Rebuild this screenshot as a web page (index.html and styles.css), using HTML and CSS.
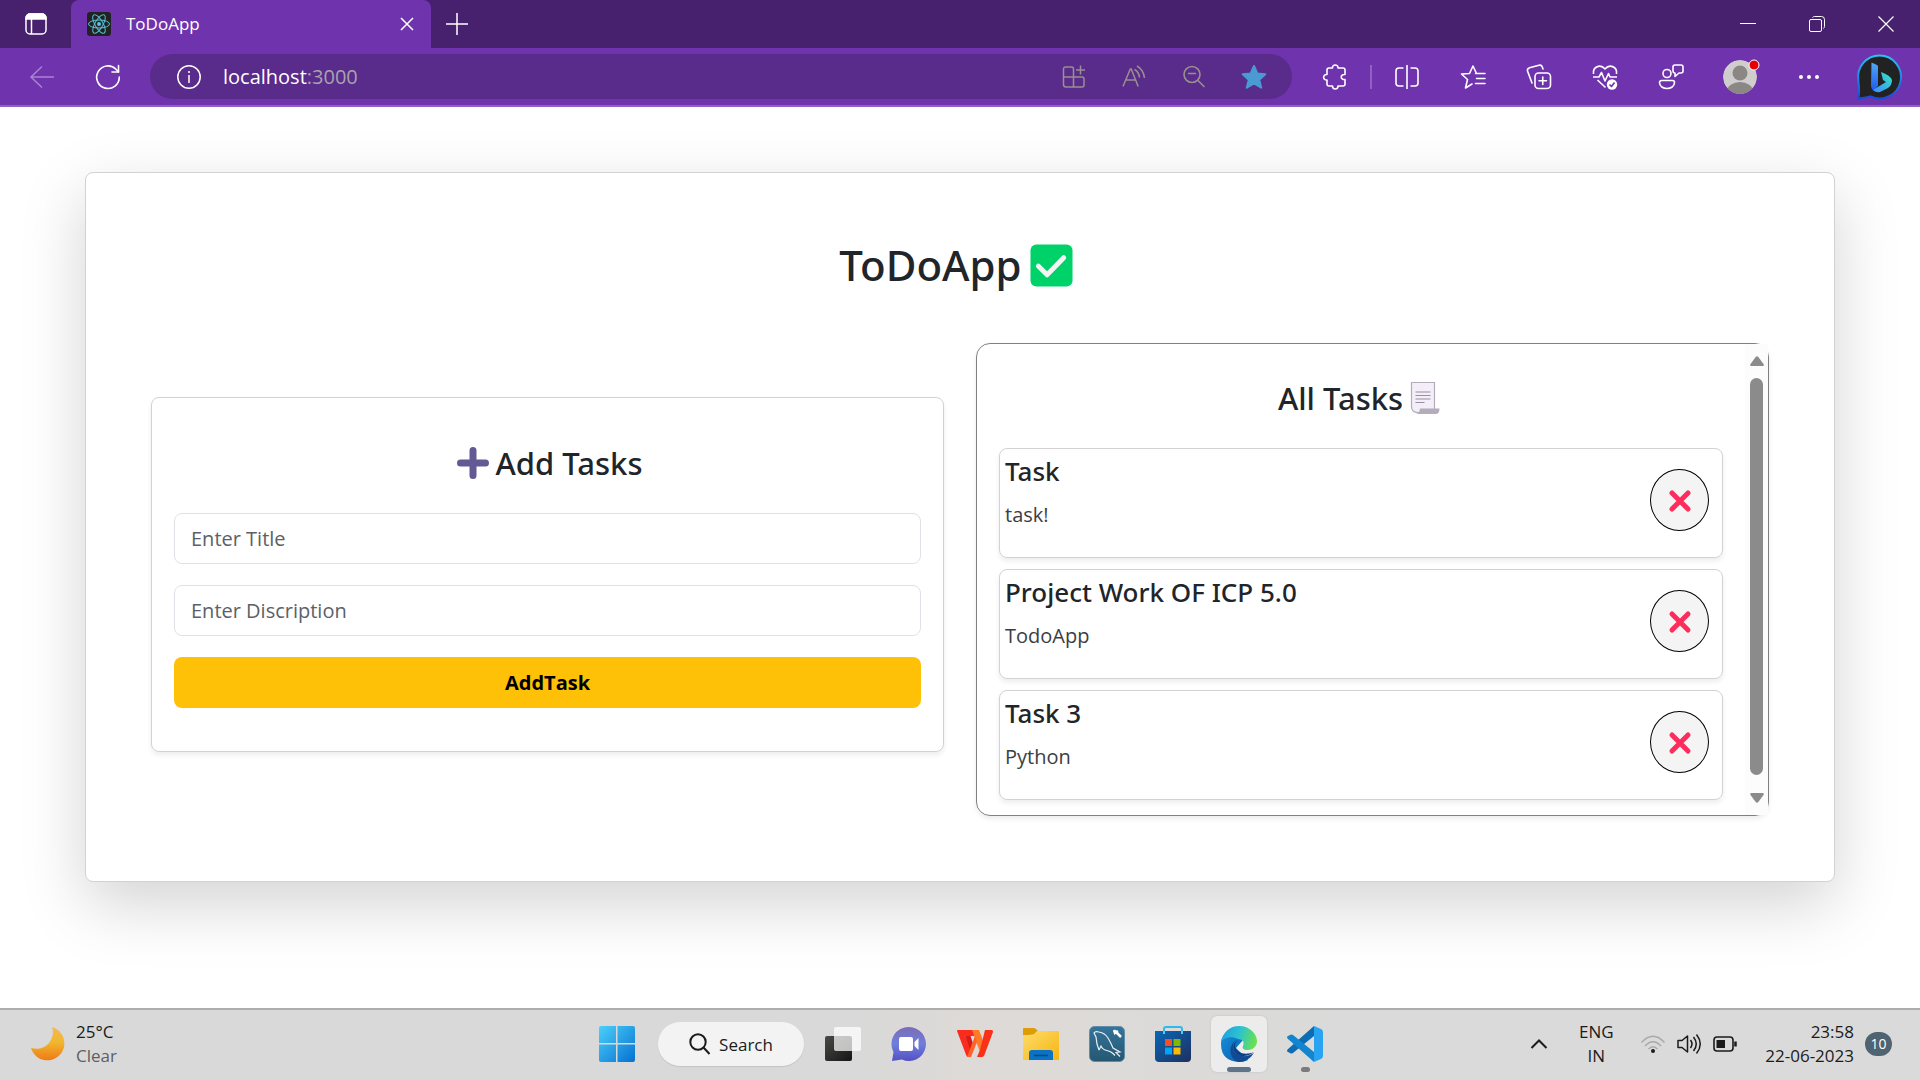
FILE: index.html
```html
<!DOCTYPE html>
<html lang="en">
<head>
<meta charset="utf-8">
<meta name="viewport" content="width=device-width, initial-scale=1">
<title>ToDoApp</title>
<link rel="stylesheet" href="styles.css">
</head>
<body>
<header class="browser">
  <div class="titlebar">
    <button class="tab-actions" aria-label="Tab actions"><svg width="24" height="24" viewBox="0 0 24 24" fill="none" stroke="#fff" stroke-width="1.5"><rect x="2" y="2" width="20" height="20" rx="4"/><path d="M2 6a4 4 0 0 1 4-4h12a4 4 0 0 1 4 4v1H2z" fill="#fff"/><path d="M7.500 7v15"/></svg></button>
    <div class="tab">
      <svg width="24" height="24" viewBox="0 0 24 24" fill="none" stroke="#58c4dc" stroke-width="1"><rect width="24" height="24" rx="3" fill="#222" stroke="none"/><ellipse cx="12" cy="12" rx="10.500" ry="4"/><ellipse cx="12" cy="12" rx="10.500" ry="4" transform="rotate(60 12 12)"/><ellipse cx="12" cy="12" rx="10.500" ry="4" transform="rotate(120 12 12)"/><circle cx="12" cy="12" r="2" fill="#58c4dc" stroke="none"/></svg>
      <span class="tab-title">ToDoApp</span>
      <button class="tab-close" aria-label="Close tab"><svg width="14" height="14" viewBox="0 0 14 14" stroke="#fff" stroke-width="1.500"><path d="M1 1l12 12M13 1L1 13"/></svg></button>
    </div>
    <button class="new-tab" aria-label="New tab"><svg width="22" height="22" viewBox="0 0 22 22" stroke="#fff" stroke-width="1.500"><path d="M11 0v22M0 11h22"/></svg></button>
    <div class="window-controls">
      <button aria-label="Minimize"><svg width="16" height="16" viewBox="0 0 16 16" stroke="#fff"><path d="M0 7.500h16"/></svg></button>
      <button aria-label="Restore"><svg width="16" height="16" viewBox="0 0 16 16" fill="none" stroke="#fff"><rect x=".5" y="3.500" width="12" height="12" rx="1.500"/><path d="M3.500 1.500q1-1 2-1h7a3 3 0 0 1 3 3v7q0 1-1 2"/></svg></button>
      <button aria-label="Close window"><svg width="16" height="16" viewBox="0 0 16 16" stroke="#fff" stroke-width="1.200"><path d="M.5.5l15 15M15.500.5l-15 15"/></svg></button>
    </div>
  </div>
  <div class="toolbar">
    <button class="back" aria-label="Back"><svg width="24" height="24" viewBox="0 0 24 24" fill="none" stroke="#a884cf" stroke-width="1.500"><path d="M24 12H1M12 1.500L1 12l11 10.500"/></svg></button>
    <button class="refresh" aria-label="Refresh"><svg width="26" height="26" viewBox="0 0 26 26" fill="none" stroke="#fff" stroke-width="1.600" stroke-linecap="round" stroke-linejoin="round"><path d="M24.300 13A11.300 11.300 0 1 1 21 5.200L23.500 8"/><path d="M23.500 1.500V8H17"/></svg></button>
    <div class="address">
      <svg class="info" width="24" height="24" viewBox="0 0 24 24" fill="none" stroke="#fff" stroke-width="1.500"><circle cx="12" cy="12" r="11.200"/><path d="M12 10v8M12 6v2"/></svg>
      <a class="url" href="#">localhost<span class="port">:3000</span></a>
      <button aria-label="Apps"><svg width="24" height="24" viewBox="0 0 24 24" fill="none" stroke="#99908f" stroke-width="1.500"><path d="M11.500 22H4a2.500 2.500 0 0 1-2.500-2.500V4A2 2 0 0 1 3.500 2h6a2 2 0 0 1 2 2v18H20a2 2 0 0 0 2-2v-6a2 2 0 0 0-2-2H1.500M18.500.5v9M14 5h9"/></svg></button>
      <button aria-label="Read aloud"><svg width="24" height="24" viewBox="0 0 24 24" fill="none" stroke="#99908f" stroke-width="1.500"><path d="M1 21.500L8.300 4h.9l7 17.500M3.800 15h9.800M12.500 4.500q4.500 2.500 5 8M15 1q6.500 3.500 7.500 12"/></svg></button>
      <button aria-label="Zoom out"><svg width="24" height="24" viewBox="0 0 24 24" fill="none" stroke="#99908f" stroke-width="1.600"><circle cx="10" cy="9.500" r="8"/><path d="M6 8.500h8M15.700 15.200L22.500 22"/></svg></button>
      <button aria-label="Favorite"><svg width="26" height="26" viewBox="0 0 26 26" fill="#4a9ad4" stroke="#4a9ad4" stroke-width="2" stroke-linejoin="round"><path d="M13 2l3.300 7.500 8 .7-6 5.500 1.900 8L13 19.500l-7.200 4.200 1.900-8-6-5.500 8-.7z"/></svg></button>
    </div>
    <button class="tool" aria-label="Extensions"><svg width="26" height="26" viewBox="0 0 26 26" fill="none" stroke="#fff" stroke-width="1.600" stroke-linejoin="round"><path d="M7 4h3.500c-.5-4 6-4 5.500 0H21a2 2 0 0 1 2 2v4.500c-5-.5-5 5.500 0 5V20a2 2 0 0 1-2 2h-5c0 4-5.500 4-5.500 0H7a2 2 0 0 1-2-2v-4c-4.500.5-4.500-6 0-5.500V6a2 2 0 0 1 2-2"/></svg></button>
    <span class="divider"></span>
    <button class="tool" aria-label="Split screen"><svg width="26" height="26" viewBox="0 0 26 26" fill="none" stroke="#fff" stroke-width="1.600"><path d="M9.500 4H5a3 3 0 0 0-3 3v12a3 3 0 0 0 3 3h4.500M16.500 4H21a3 3 0 0 1 3 3v12a3 3 0 0 1-3 3h-4.500M13 1v24"/></svg></button>
    <button class="tool" aria-label="Favorites"><svg width="26" height="26" viewBox="0 0 26 26" fill="none" stroke="#fff" stroke-width="1.600" stroke-linejoin="round" stroke-linecap="round"><path d="M19 9.500h-2.500L13 2 9.500 9.500 1.500 10l6 5.500L5.500 24l6.500-4M15.500 9.500H25M16.500 14.500H25M15.500 19.500H25"/></svg></button>
    <button class="tool" aria-label="Collections"><svg width="26" height="26" viewBox="0 0 26 26" fill="none" stroke="#fff" stroke-width="1.600" stroke-linecap="round"><rect x="9" y="9" width="15.500" height="15.500" rx="3.500"/><path d="M16.750 13v7.500M13 16.750h7.500M6 19L1.500 7Q1 4.500 3.500 3.700L13 1.200q2.500-.5 3.300 1.800L17 5"/></svg></button>
    <button class="tool" aria-label="Browser essentials"><svg width="26" height="26" viewBox="0 0 26 26" fill="none" stroke="#fff" stroke-width="1.600" stroke-linejoin="round"><path d="M1.500 10C.5 2 9 0 13 5c4-5 12.500-3 11.500 5M1 13h6l2.500-4.500L13 17l3.500-7.500L18 13h7M5.500 16l8 7.500"/><circle cx="20" cy="20.500" r="5.200" fill="#fff" stroke="none"/><path d="M17.500 20.500l2 2 3-4" stroke="#6f33ad"/></svg></button>
    <button class="tool" aria-label="Feedback"><svg width="26" height="26" viewBox="0 0 26 26" fill="none" stroke="#fff" stroke-width="1.600" stroke-linejoin="round"><circle cx="9" cy="9.500" r="4"/><path d="M3.500 16.500h11a2 2 0 0 1 2 2c0 8-15 8-15 0a2 2 0 0 1 2-2zM16.500 1H23a2 2 0 0 1 2 2v4a2 2 0 0 1-2 2h-2l-4 3.500V9a2 2 0 0 1-2-2V3a2 2 0 0 1 2-2z"/></svg></button>
    <button class="tool profile" aria-label="Profile"><svg width="38" height="38" viewBox="0 0 38 38"><defs><clipPath id="face"><circle cx="19" cy="19" r="17"/></clipPath></defs><g clip-path="url(#face)"><circle cx="19" cy="19" r="17" fill="#d0cecd"/><circle cx="19" cy="15" r="7.500" fill="#8b8785"/><ellipse cx="19" cy="33" rx="13" ry="9" fill="#8b8785"/></g><circle cx="33" cy="7" r="5" fill="#e30000" stroke="#fff"/></svg></button>
    <button class="tool" aria-label="Settings and more"><svg width="22" height="6" viewBox="0 0 22 6" fill="#fff"><circle cx="3" cy="3" r="2"/><circle cx="11" cy="3" r="2"/><circle cx="19" cy="3" r="2"/></svg></button>
    <button class="tool bing" aria-label="Bing Chat"><svg width="46" height="46" viewBox="0 0 46 46"><defs><linearGradient id="ring" x1="0" y1="0" x2="0" y2="1"><stop offset="0" stop-color="#25c5f2"/><stop offset="1" stop-color="#1c49d8"/></linearGradient><linearGradient id="letter" x1="0" y1="0" x2="0" y2="1"><stop offset="0" stop-color="#4fa9f5"/><stop offset="1" stop-color="#1f58ed"/></linearGradient><linearGradient id="swoosh" x1="1" y1="0" x2="0" y2="1"><stop offset="0" stop-color="#31e5c0"/><stop offset="1" stop-color="#3d8bff"/></linearGradient></defs><path d="M23.500 1.500a21.500 21.500 0 1 1-9 41Q9 44 2 44.500 4 40 2.300 26A21.500 21.500 0 0 1 23.500 1.500z" fill="#222" stroke="url(#ring)" stroke-width="2"/><path d="M15.500 8.500l5.500 2.500q1 .5 1 2v19l-4 5q-3-2-3-6z" fill="url(#letter)"/><path d="M25 18q9 3 11 8 0 5-4 8l-8 4q-4 1-7-2l13-8-3-2z" fill="url(#swoosh)"/></svg></button>
  </div>
</header>

<main class="page">
  <section class="app">
    <h1 class="app-title">ToDoApp <svg width="43" height="43" viewBox="0 0 44 44"><rect x=".5" y=".5" width="43" height="43" rx="6" fill="#00d26a"/><path d="M8.500 22.500l9 9L34.500 14" fill="none" stroke="#f4f4f4" stroke-width="5" stroke-linecap="round" stroke-linejoin="round"/></svg></h1>
    <div class="columns">
      <form class="add-card">
        <h2 class="heading"><svg width="32" height="32" viewBox="0 0 32 32" stroke="#635994" stroke-width="7" stroke-linecap="round"><path d="M16 3.500v25M3.500 16h25"/></svg> Add Tasks</h2>
        <input class="field" type="text" placeholder="Enter Title" aria-label="Title">
        <input class="field" type="text" placeholder="Enter Discription" aria-label="Description">
        <button class="submit" type="button">AddTask</button>
      </form>
      <section class="tasks">
        <div class="tasks-body">
          <h2 class="heading">All Tasks <svg width="30" height="34" viewBox="0 0 30 34"><path d="M1.500 1.500h23v30H8q-6.500 0-6.500-6z" fill="#f3eef8" stroke="#b4acbc" stroke-width="1.200"/><path d="M5.500 11h15M5.500 14.500h15M5.500 18h15M5.500 21.500h9" stroke="#998ea4" stroke-width="1.200"/><path d="M10 27.500h19.500q0 5.500-4 5.500H6q3.500-1 4-5.500z" fill="#b4acbc"/></svg></h2>
          <ul class="task-list">
            <li class="task">
              <div><h3 class="task-title">Task</h3><p class="task-text">task!</p></div>
              <button class="delete" aria-label="Delete Task"><svg width="22" height="22" viewBox="0 0 22 22" stroke-width="5" stroke-linecap="round"><path class="cross" d="M3 4l16 16M19 4L3 20"/></svg></button>
            </li>
            <li class="task">
              <div><h3 class="task-title">Project Work OF ICP 5.0</h3><p class="task-text">TodoApp</p></div>
              <button class="delete" aria-label="Delete Project Work OF ICP 5.0"><svg width="22" height="22" viewBox="0 0 22 22" stroke-width="5" stroke-linecap="round"><path class="cross" d="M3 4l16 16M19 4L3 20"/></svg></button>
            </li>
            <li class="task">
              <div><h3 class="task-title">Task 3</h3><p class="task-text">Python</p></div>
              <button class="delete" aria-label="Delete Task 3"><svg width="22" height="22" viewBox="0 0 22 22" stroke-width="5" stroke-linecap="round"><path class="cross" d="M3 4l16 16M19 4L3 20"/></svg></button>
            </li>
          </ul>
        </div>
        <div class="scrollbar" aria-hidden="true">
          <svg width="14" height="10" viewBox="0 0 14 10"><path d="M5.500 1.200q1.500-2 3 0L13.500 8q1 2-1 2h-11q-2 0-1-2z" fill="#8b8b8b"/></svg>
          <span class="thumb"></span>
          <svg width="14" height="10" viewBox="0 0 14 10"><path d="M5.500 8.800q1.500 2 3 0L13.500 2q1-2-1-2h-11q-2 0-1 2z" fill="#8b8b8b"/></svg>
        </div>
      </section>
    </div>
  </section>
</main>

<footer class="taskbar">
  <div class="weather">
    <svg width="34" height="34" viewBox="0 0 34 34"><defs><linearGradient id="moon" x1="0" y1="0" x2="0" y2="1"><stop offset="0" stop-color="#f5b656"/><stop offset=".45" stop-color="#f0b82e"/><stop offset="1" stop-color="#ef7a16"/></linearGradient></defs><path d="M22 0A17 17 0 1 1 1 21Q12 24 19 16 25 8 22 0z" fill="url(#moon)"/></svg>
    <div class="stack"><span>25°C</span><span class="muted">Clear</span></div>
  </div>
  <nav class="apps" aria-label="Taskbar apps">
    <button class="app-icon" aria-label="Start"><svg width="36" height="36" viewBox="0 0 36 36"><defs><linearGradient id="win" x1="0" y1="0" x2="1" y2="1" ><stop offset="0" stop-color="#4cd0fc"/><stop offset="1" stop-color="#0471d0"/></linearGradient></defs><path d="M2 0h15v17H0V2q0-2 2-2zM18.500 0H34q2 0 2 2v15H18.500zM0 18.500h17V36H2q-2 0-2-2zM18.500 18.500H36V34q0 2-2 2H18.500z" fill="url(#win)"/></svg></button>
    <button class="search"><svg width="22" height="22" viewBox="0 0 22 22" fill="none" stroke="#1b1b1b" stroke-width="2"><circle cx="9" cy="9" r="7.700"/><path d="M14.500 14.500L20.500 21"/></svg>Search</button>
    <button class="app-icon" aria-label="Task view"><svg width="36" height="36" viewBox="0 0 36 36"><defs><linearGradient id="dark" x1="0" y1="0" x2="1" y2="1"><stop offset="0" stop-color="#4a4a48"/><stop offset="1" stop-color="#151515"/></linearGradient></defs><rect y="10" width="27" height="25" rx="2" fill="url(#dark)"/><rect x="9" y="1" width="27" height="24" rx="2" fill="#fff" fill-opacity=".72"/></svg></button>
    <button class="app-icon" aria-label="Chat"><svg width="36" height="36" viewBox="0 0 36 36"><defs><linearGradient id="chat" x1="0" y1="0" x2="0" y2="1"><stop offset="0" stop-color="#7b6cb5"/><stop offset=".5" stop-color="#6f7fdd"/><stop offset="1" stop-color="#5450c2"/></linearGradient></defs><path d="M18 1a17 17 0 1 1-7 32.500L1 35l1.500-9A17 17 0 0 1 18 1z" fill="url(#chat)"/><rect x="8" y="11" width="14" height="14" rx="2" fill="#fff"/><path d="M23.500 16l4-4v12l-4-4z" fill="#fff"/></svg></button>
    <button class="app-icon" aria-label="WPS Office"><svg width="36" height="28" viewBox="0 0 36 28"><path d="M0 1q0-1 1-1h21l-3 6H8.500l6.500 15-2 6h-2q-1 0-1.500-1z" fill="#fa2c1d"/><path d="M8.500 6h5l3 9-3 6z" fill="#d81a18"/><path d="M15 0h7l5 13-4 9z" fill="#ff7a26"/><path d="M28 0h7q1 0 1 2l-9 24q-1 1-2 1h-5l3-7z" fill="#fb3019"/><path d="M18 6l2 6-6 15h-4z" fill="#ff6325"/></svg></button>
    <button class="app-icon" aria-label="File Explorer"><svg width="36" height="34" viewBox="0 0 36 34"><defs><linearGradient id="folder" x1="0" y1="0" x2="1" y2="1"><stop offset="0" stop-color="#ffdc6a"/><stop offset="1" stop-color="#f5b512"/></linearGradient></defs><path d="M0 2q0-1 1-1h10q1 0 4 3v6H0z" fill="#dd9b06"/><path d="M0 8q9 0 11-1l3-3h21q1 0 1 1v27q0 1-1 1H1q-1 0-1-1z" fill="url(#folder)"/><path d="M6 33v-7q0-3 3-3h18q3 0 3 3v7z" fill="#0b73c5"/><path d="M11 28.500h14" stroke="#07467f" stroke-width="1.500"/></svg></button>
    <button class="app-icon" aria-label="MySQL Workbench"><svg width="36" height="36" viewBox="0 0 36 36"><defs><linearGradient id="sql" x1="0" y1="0" x2="0" y2="1"><stop offset="0" stop-color="#35749c"/><stop offset="1" stop-color="#25576f"/></linearGradient></defs><rect x=".5" y=".5" width="35" height="35" rx="5" fill="url(#sql)" stroke="#5f8da6"/><path d="M10 24l-2-6-1-7-2-4q1-2 5-1 6 1 9 6 3 5 5 10l7 4-4 .5 4 4M10 24l2-4q2 4 6 4.500 4 1 6 3l2 2" fill="none" stroke="#e7eff3" stroke-width="1.200"/><path d="M26 5l6 6M25 4l1 3 3-2" stroke="#fff" stroke-width="2.500" fill="none"/></svg></button>
    <button class="app-icon" aria-label="Microsoft Store"><svg width="36" height="36" viewBox="0 0 36 36"><defs><linearGradient id="store" x1="0" y1="0" x2="1" y2="1"><stop offset="0" stop-color="#0868b8"/><stop offset="1" stop-color="#1f2f5e"/></linearGradient></defs><path d="M9 8V3q0-2 2-2h14q2 0 2 2v5" fill="none" stroke="#30b9ee" stroke-width="2"/><path d="M0 5h36v27q0 4-4 4H4q-4 0-4-4z" fill="url(#store)"/><path d="M9 5v3M27 5v3" stroke="#53ccf5" stroke-width="2"/><path fill="#f25022" d="M10 13h7v7h-7z"/><path fill="#7fba00" d="M18.500 13h7v7h-7z"/><path fill="#00a4ef" d="M10 21.500h7v7h-7z"/><path fill="#ffb900" d="M18.500 21.500h7v7h-7z"/></svg></button>
    <button class="app-icon running active" aria-label="Microsoft Edge"><svg width="36" height="36" viewBox="0 0 36 36"><defs><linearGradient id="edgeTop" x1="0" y1=".3" x2="1" y2=".5"><stop offset="0" stop-color="#1f9fe0"/><stop offset=".5" stop-color="#2cc3cf"/><stop offset="1" stop-color="#6be24a"/></linearGradient><linearGradient id="edgeLow" x1="0" y1="0" x2="1" y2="1"><stop offset="0" stop-color="#1590df"/><stop offset="1" stop-color="#0c59a4"/></linearGradient></defs><path d="M0 18C0 8 8 3 14 6l8 8-7 8 12 12Q23 36 18 36 0 35 0 18z" fill="url(#edgeLow)"/><path d="M0 16C2 6 9 0 18 0c11 0 18 8 18 15 0 6-5 9-9 9-5 0-6-2-5-4 2-4-1-7-5-7-8-4-15 0-17 3z" fill="url(#edgeTop)"/><path d="M15 14c-6 6-3 14 5 16 5 1 9-1 13-3q-6 9-15 9c-9-2-12-15-3-22z" fill="#104a92"/><path d="M17 14c-4 3-4 8 0 11 5 4 11 3 16 1-6 5-13 5-17 2-5-4-5-11 1-14z" fill="#0f3f83"/></svg></button>
    <button class="app-icon running" aria-label="Visual Studio Code"><svg width="36" height="36" viewBox="0 0 36 36"><path d="M27 0L1 23q-2 2 0 3l2 1q1 1 3 0L27 10z" fill="#0d6db4"/><path d="M27 36L1 13q-2-2 0-3l2-1q1-1 3 0l21 17z" fill="#1285cf"/><path d="M27 0l7 3q2 1 2 3v24q0 2-2 3l-7 3z" fill="#2aa4f2"/></svg></button>
  </nav>
  <div class="tray">
    <button class="chevron" aria-label="Show hidden icons"><svg width="18" height="10" viewBox="0 0 18 10" fill="none" stroke="#1b1b1b" stroke-width="2"><path d="M1.500 9L9 1.500 16.500 9"/></svg></button>
    <div class="stack language"><span>ENG</span><span>IN</span></div>
    <div class="status">
      <svg width="24" height="20" viewBox="0 0 24 20" fill="none" stroke="#a9a9a9" stroke-width="1.400"><path d="M.5 8.500Q12-4 23.500 8.500M4 12q8-8.500 16 0M7.500 15q4.500-4.500 9 0"/><circle cx="12" cy="17" r="2" fill="#1b1b1b" stroke="none"/></svg>
      <svg width="24" height="22" viewBox="0 0 24 22" fill="none" stroke="#1b1b1b" stroke-width="1.500" stroke-linejoin="round"><path d="M1 7.500h4L10.500 3v16L5 14.500H1zM13.500 7q3 4 0 8M16.500 4q5.500 7 0 14M19.500 1.500q7.500 9.500 0 19"/></svg>
      <svg width="24" height="16" viewBox="0 0 24 16" fill="none" stroke="#1b1b1b" stroke-width="1.600"><rect x="1" y="1" width="19" height="14" rx="3"/><rect x="3.500" y="4" width="8.500" height="8" fill="#1b1b1b" stroke="none"/><path d="M22.500 5.500v5" stroke-width="2.500"/></svg>
    </div>
    <div class="stack clock"><span>23:58</span><span>22-06-2023</span></div>
    <span class="badge">10</span>
  </div>
</footer>
</body>
</html>
```
FILE: styles.css
```css
* { box-sizing: border-box; }
body {
  margin: 0;
  min-height: 100vh;
  display: flex;
  flex-direction: column;
  background: #fff;
  color: #212529;
  font-family: "Open Sans", "Noto Sans", sans-serif;
  font-size: 20px;
}
h1, h2, h3, p, ul { margin: 0; padding: 0; }
svg { display: block; flex: none; overflow: visible; }
button {
  border: 0;
  padding: 0;
  background: none;
  color: inherit;
  font: inherit;
  display: flex;
  align-items: center;
  justify-content: center;
}

/* Browser frame */
.browser { background: #6f33ad; border-bottom: 2px solid #9160c4; color: #fff; }
.titlebar { display: flex; height: 48px; background: #47216e; }
.tab-actions { width: 71px; }
.tab {
  width: 360px;
  display: flex;
  align-items: center;
  padding: 0 17px 0 16px;
  background: #6f33ad;
  border-radius: 8px 8px 0 0;
}
.tab-title { flex: 1; margin-left: 15px; font-size: 17px; line-height: 24px; }
.new-tab { width: 52px; }
.window-controls { display: flex; margin-left: auto; }
.window-controls button { width: 69px; }
.toolbar { display: flex; align-items: center; height: 57px; padding-right: 4px; }
.back { width: 84px; }
.refresh { width: 48px; }
.address {
  flex: 1;
  display: flex;
  align-items: center;
  height: 45px;
  margin: 0 10px 0 18px;
  padding: 0 8px 0 27px;
  border-radius: 23px;
  background: #592b8a;
}
.address button { width: 60px; }
.url { flex: 1; margin-left: 22px; color: #fff; text-decoration: none; }
.port { color: #aaa2ad; }
.tool { width: 66px; }
.divider { width: 2px; height: 24px; margin: 0 2px; background: #9160c4; }
.profile { width: 72px; }
.bing { width: 74px; }

/* Todo page */
.page { flex: 1; padding: 65px 85px; overflow: hidden; }
.app {
  padding: 65px;
  border: 1px solid #d2d2d2;
  border-radius: 8px;
  background: #fff;
  box-shadow: 0 22px 65px rgba(0, 0, 0, .175);
}
.app-title, .heading {
  display: flex;
  align-items: center;
  justify-content: center;
  gap: 8px;
  font-family: "Noto Sans", "Open Sans", sans-serif;
  font-weight: 500;
}
.app-title { margin-bottom: 51px; padding-right: 8px; font-size: 42px; line-height: 54px; }
.heading { gap: 7px; padding-right: 4px; font-size: 31px; line-height: 40px; margin-bottom: 30px; }
.add-card .heading { padding: 0 0 0 4px; }
.columns { display: grid; grid-template-columns: 1fr 1fr; gap: 32px; align-items: center; }
.add-card {
  display: flex;
  flex-direction: column;
  margin-bottom: 11px;
  padding: 45px 22px 43px;
  border: 1px solid #d2d2d2;
  border-radius: 8px;
  box-shadow: 0 3px 5px rgba(0, 0, 0, .075);
}
.field {
  height: 51px;
  margin-bottom: 21px;
  padding: 0 16px;
  border: 1px solid #dee2e6;
  border-radius: 8px;
  background: #fff;
  font: inherit;
}
.field::placeholder { color: #5c6166; opacity: 1; }
.submit { height: 51px; border-radius: 8px; background: #ffc107; color: #000; font-weight: 700; }
.tasks {
  display: flex;
  border: 1px solid #808080;
  border-radius: 14px;
  box-shadow: 0 3px 5px rgba(0, 0, 0, .075);
}
.tasks-body { flex: 1; padding: 34px 22px 15px; }
.task-list { display: grid; gap: 11px; list-style: none; }
.task {
  display: flex;
  justify-content: space-between;
  height: 110px;
  padding: 5px 13px 5px 5px;
  border: 1px solid #d2d2d2;
  border-radius: 8px;
  box-shadow: 0 3px 5px rgba(0, 0, 0, .075);
}
.task-title {
  font-family: "Noto Sans", "Open Sans", sans-serif;
  font-size: 26px;
  font-weight: 500;
  line-height: 34px;
  margin-bottom: 11px;
}
.task-text { line-height: 32px; color: #3b3e42; }
.delete {
  width: 59px;
  height: 62px;
  margin-top: 15px;
  border: 1px solid #000;
  border-radius: 50%;
  background: #f4f4f4;
}
.cross { stroke: #fc2c5d; }
.scrollbar {
  width: 23px;
  display: flex;
  flex-direction: column;
  align-items: center;
  gap: 12px;
  padding: 12px 0;
  background: #fcfcfc;
}
.thumb { flex: 1; width: 13px; margin-bottom: 6px; border-radius: 7px; background: #8b8b8b; }

/* Taskbar */
.taskbar {
  display: grid;
  grid-template-columns: 1fr auto 1fr;
  align-items: center;
  height: 72px;
  padding-bottom: 2px;
  border-top: 2px solid #adadad;
  background: linear-gradient(90deg, #d9d9d9 45%, #dedad7 52%, #dadada 70%);
  color: #1b1b1b;
  font-size: 17px;
}
.stack { display: flex; flex-direction: column; line-height: 24px; }
.weather { display: flex; align-items: center; gap: 12px; padding-left: 30px; }
.muted { color: #5f5f5f; }
.apps { display: flex; align-items: center; padding-left: 2px; }
.app-icon { position: relative; width: 66px; height: 56px; }
.search {
  width: 146px;
  height: 44px;
  margin: 0 6px 0 8px;
  gap: 8px;
  border-radius: 22px;
  background: #f3f3f3;
  box-shadow: 0 1px 1px #c4c4c4;
}
.active { width: 56px; margin: 0 5px; border-radius: 6px; background: #ececec; box-shadow: 0 0 2px #bbb; }
.running::after {
  content: "";
  position: absolute;
  bottom: 0;
  width: 9px;
  height: 5px;
  border-radius: 3px;
  background: #7b7b7b;
}
.active::after { width: 24px; background: #5f7587; }
.tray { display: flex; align-items: center; justify-content: flex-end; padding-right: 28px; }
.chevron { width: 48px; height: 48px; }
.language { width: 66px; text-align: center; }
.status { display: flex; align-items: center; gap: 12px; margin: 0 28px 0 12px; }
.clock { text-align: right; }
.badge {
  width: 27px;
  margin-left: 11px;
  border-radius: 12px;
  background: #4f6370;
  color: #fff;
  font-size: 14px;
  line-height: 24px;
  text-align: center;
}
```
